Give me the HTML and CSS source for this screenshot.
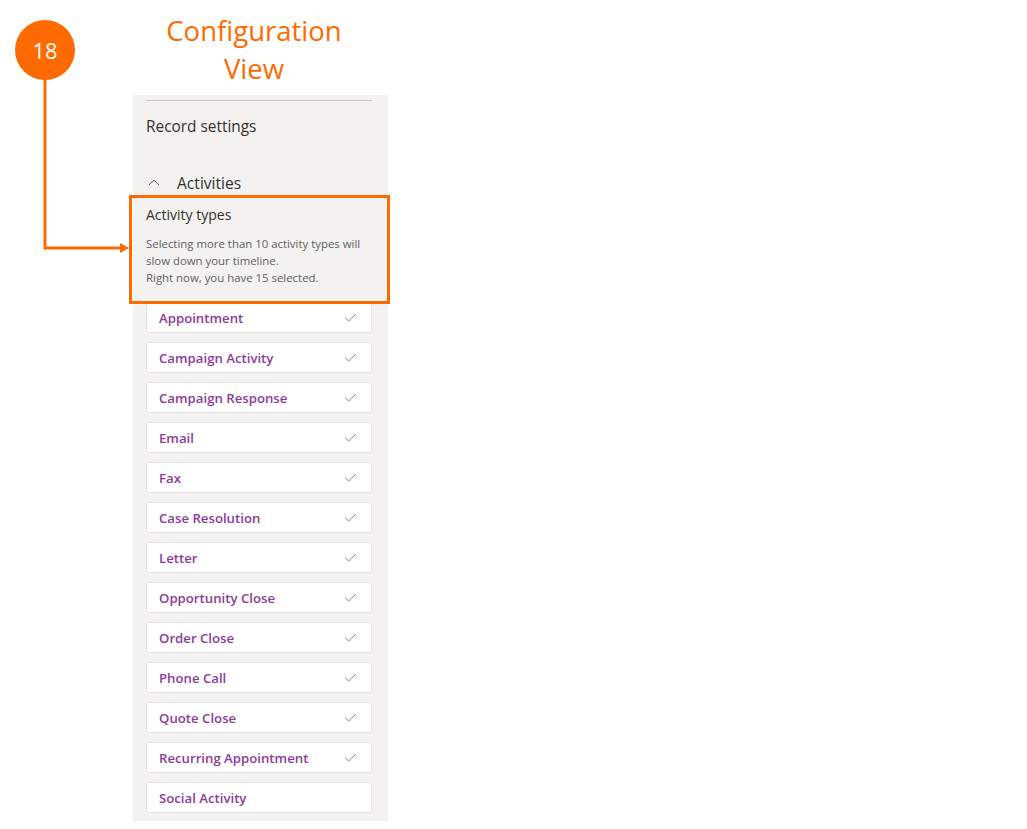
FILE: index.html
```html
<!DOCTYPE html>
<html>
<head>
<meta charset="utf-8">
<link rel="stylesheet" href="styles.css">
</head>
<body>
<div class="page">
  <div class="column">
    <h1 class="title">Configuration<br>View</h1>
    <div class="panel">
      <div class="sep"></div>
      <div class="record">Record settings</div>
      <div class="section">
        <svg class="chev" width="12" height="8" viewBox="0 0 12 8"><path d="M1 7 L6 2 L11 7" fill="none" stroke="#605e5c" stroke-width="1"/></svg>
        <span>Activities</span>
      </div>
      <div class="types">Activity types</div>
      <p class="desc">Selecting more than 10 activity types will slow down your timeline.<br>Right now, you have 15 selected.</p>
      <ul class="list">
        <li class="item">Appointment<svg class="check" viewBox="0 0 14 10"><path d="M1 5 L5 9 L13 1" fill="none" stroke="#9a5fb0" stroke-width="1"/></svg></li>
        <li class="item">Campaign Activity<svg class="check" viewBox="0 0 14 10"><path d="M1 5 L5 9 L13 1" fill="none" stroke="#9a5fb0" stroke-width="1"/></svg></li>
        <li class="item">Campaign Response<svg class="check" viewBox="0 0 14 10"><path d="M1 5 L5 9 L13 1" fill="none" stroke="#9a5fb0" stroke-width="1"/></svg></li>
        <li class="item">Email<svg class="check" viewBox="0 0 14 10"><path d="M1 5 L5 9 L13 1" fill="none" stroke="#9a5fb0" stroke-width="1"/></svg></li>
        <li class="item">Fax<svg class="check" viewBox="0 0 14 10"><path d="M1 5 L5 9 L13 1" fill="none" stroke="#9a5fb0" stroke-width="1"/></svg></li>
        <li class="item">Case Resolution<svg class="check" viewBox="0 0 14 10"><path d="M1 5 L5 9 L13 1" fill="none" stroke="#9a5fb0" stroke-width="1"/></svg></li>
        <li class="item">Letter<svg class="check" viewBox="0 0 14 10"><path d="M1 5 L5 9 L13 1" fill="none" stroke="#9a5fb0" stroke-width="1"/></svg></li>
        <li class="item">Opportunity Close<svg class="check" viewBox="0 0 14 10"><path d="M1 5 L5 9 L13 1" fill="none" stroke="#9a5fb0" stroke-width="1"/></svg></li>
        <li class="item">Order Close<svg class="check" viewBox="0 0 14 10"><path d="M1 5 L5 9 L13 1" fill="none" stroke="#9a5fb0" stroke-width="1"/></svg></li>
        <li class="item">Phone Call<svg class="check" viewBox="0 0 14 10"><path d="M1 5 L5 9 L13 1" fill="none" stroke="#9a5fb0" stroke-width="1"/></svg></li>
        <li class="item">Quote Close<svg class="check" viewBox="0 0 14 10"><path d="M1 5 L5 9 L13 1" fill="none" stroke="#9a5fb0" stroke-width="1"/></svg></li>
        <li class="item">Recurring Appointment<svg class="check" viewBox="0 0 14 10"><path d="M1 5 L5 9 L13 1" fill="none" stroke="#9a5fb0" stroke-width="1"/></svg></li>
        <li class="item">Social Activity</li>
      </ul>
    </div>
  </div>
  <div class="badge">18</div>
  <svg class="connector" width="140" height="260" viewBox="0 0 140 260">
    <path d="M45 78 V248 H121" fill="none" stroke="#ff6a00" stroke-width="3"/>
    <path d="M120 243 L129 248 L120 253 Z" fill="#ff6a00"/>
  </svg>
  <div class="highlight"></div>
</div>
</body>
</html>
```

FILE: styles.css
```css
* { box-sizing: border-box; }
html, body { margin: 0; padding: 0; background: #fff; }
body { font-family: "Open Sans", "Noto Sans", sans-serif; }
.page { position: relative; width: 1027px; height: 829px; overflow: hidden; }
.column { margin-left: 133px; width: 255px; padding-top: 12px; }
.title {
  margin: 0;
  width: 242px;
  text-align: center;
  font-weight: 400;
  font-size: 27.5px;
  line-height: 38px;
  color: #ff6a00;
  height: 83px;
}
.panel {
  background: #f3f2f1;
  padding: 5px 16px 0 13px;
  height: 726px;
}
.sep { height: 1px; background: #c8c6c4; }
.record { margin-top: 15px; font-size: 15.4px; line-height: 22px; color: #323130; }
.section { margin-top: 34px; display: flex; align-items: center; height: 22px; font-size: 15.6px; color: #323130; }
.chev { margin-left: 2px; margin-right: 17px; margin-top: -2px; }
.types { margin-top: 11px; font-size: 14px; line-height: 20px; color: #323130; font-weight: 400; }
.desc { margin: 10px 0 0; font-size: 11.4px; line-height: 17px; color: #605e5c; }
.list { list-style: none; margin: 16px 0 0; padding: 0; display: flex; flex-direction: column; gap: 9px; }
.item {
  height: 31px;
  background: #fff;
  border: 1px solid #e6e4e2;
  border-radius: 3px;
  display: flex;
  align-items: center;
  justify-content: space-between;
  padding: 0 14px 0 12px;
  font-size: 13.2px;
  font-weight: 600;
  color: #8e3a9d;
}
.check { width: 13px; height: 9px; }
.badge {
  position: absolute;
  left: 15px; top: 20px;
  width: 60px; height: 60px;
  border-radius: 50%;
  background: #ff6a00;
  color: #fff;
  font-size: 22px;
  display: flex; align-items: center; justify-content: center;
}
.connector { position: absolute; left: 0; top: 0; }
.highlight {
  position: absolute;
  left: 129px; top: 195px;
  width: 261px; height: 109px;
  border: 3px solid #ff6a00;
}
```
